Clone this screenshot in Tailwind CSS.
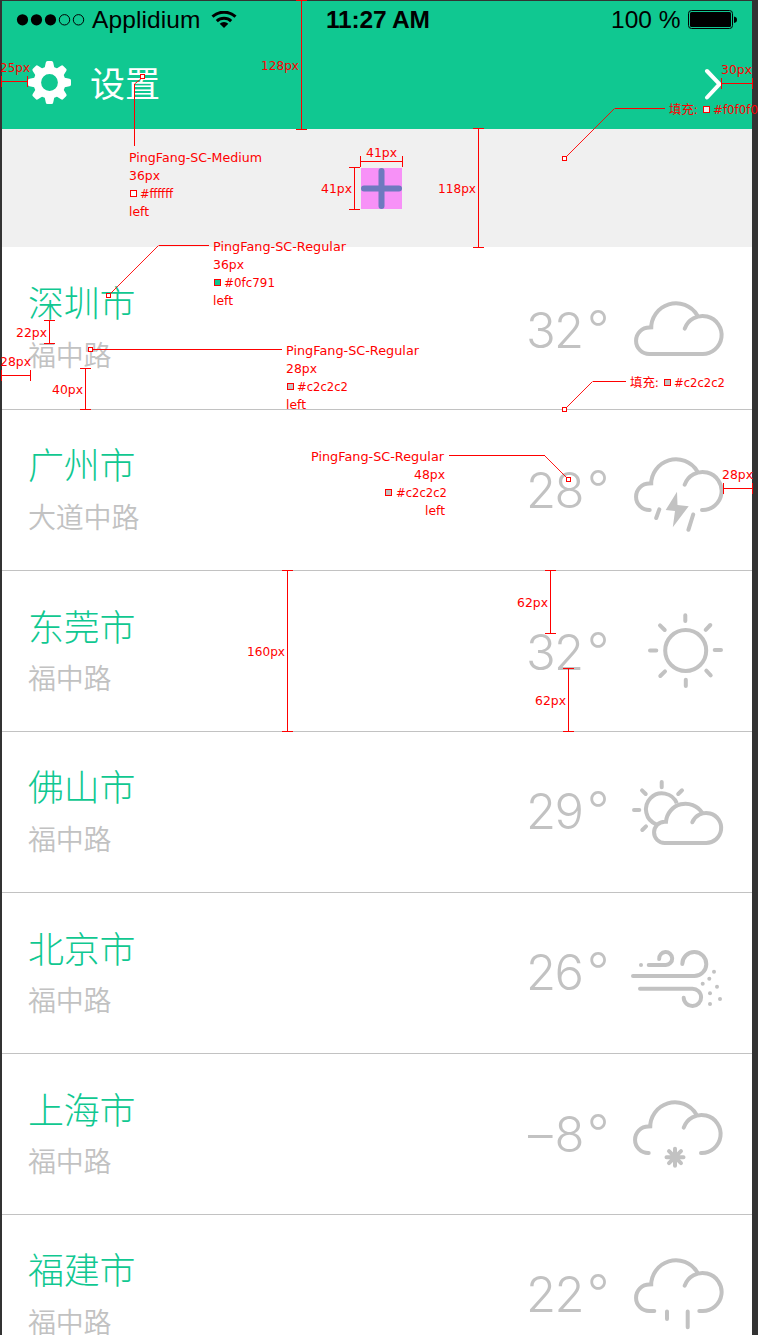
<!DOCTYPE html>
<html lang="zh-CN">
<head>
<meta charset="utf-8">
<title>设置</title>
<script src="https://cdn.jsdelivr.net/npm/@tailwindcss/browser@4"></script>
</head>
<body class="bg-[#333333]">
<div class="relative w-[758px] h-[1335px] overflow-hidden bg-[#333333] pt-px pl-[2px] font-['Noto_Sans_CJK_SC',sans-serif]">
  <main class="w-[750px] h-[1334px] overflow-hidden bg-white">
    <header class="h-[128px] bg-[#10c891]">
      <div class="flex h-[37px] items-center text-black font-['Liberation_Sans',sans-serif]">
        <svg class="ml-[14px] w-[70px] h-[14px]" viewBox="0 0 70 14"><g><circle cx="6.5" cy="6.8" r="5.6"/><circle cx="20.5" cy="6.8" r="5.6"/><circle cx="34.5" cy="6.8" r="5.6"/></g><g fill="none" stroke="#000"><circle cx="48.5" cy="6.8" r="5.2"/><circle cx="62.5" cy="6.8" r="5.2"/></g></svg>
        <span class="ml-[6px] w-[110px] text-[24.5px] leading-[37px] tracking-[0.1px] whitespace-nowrap">Applidium</span>
        <svg class="ml-[9px] w-[26px] h-[18px]" viewBox="0 0 26 18"><g fill="none" stroke="#000" stroke-width="3"><path d="M1.5 5.7a16.8 16.8 0 0 1 23 0"/><path d="M5.8 10.1a10.5 10.5 0 0 1 14.4 0"/></g><path d="M13 17l-4.3-4.2a6.3 6.3 0 0 1 8.6 0z"/></svg>
        <span class="ml-[89px] w-[110px] text-[24.5px] font-bold leading-[37px] tracking-[-0.2px] whitespace-nowrap">11:27 AM</span>
        <span class="ml-[175px] w-[72px] text-[24.5px] leading-[37px] whitespace-nowrap">100 %</span>
        <svg class="ml-[5px] w-[50px] h-[20px]" viewBox="0 0 50 20"><rect x=".5" y=".5" width="44" height="18" rx="3" fill="none" stroke="#000"/><rect x="2" y="2" width="41" height="15" rx="1.5"/><path d="M46 6.5q3 .5 3 3.2t-3 3.2z"/></svg>
      </div>
      <div class="flex h-[91px] items-start">
        <svg class="ml-[26px] mt-[23px] w-[43px] h-[43px]" viewBox="-21.5 -21.5 43 43" fill="#fff"><circle r="12.2" fill="none" stroke="#fff" stroke-width="7.6"/><g id="t"><path d="M-5-14L-3.7-20Q-3.5-21.5-2-21.5H2Q3.5-21.5 3.7-20L5-14z"/><path d="M-5-14L-3.7-20Q-3.5-21.5-2-21.5H2Q3.5-21.5 3.7-20L5-14z" transform="rotate(45)"/><path d="M-5-14L-3.7-20Q-3.5-21.5-2-21.5H2Q3.5-21.5 3.7-20L5-14z" transform="rotate(90)"/><path d="M-5-14L-3.7-20Q-3.5-21.5-2-21.5H2Q3.5-21.5 3.7-20L5-14z" transform="rotate(135)"/></g><use href="#t" transform="rotate(180)"/></svg>
        <h1 class="ml-[19px] mt-[24px] text-[35px] leading-[40px] font-normal text-white">设置</h1>
        <svg class="ml-auto mr-[30px] mt-[30px] w-[18px] h-[33px]" viewBox="0 0 18 33"><path d="M3 3L15.5 16.2L3 29.5" fill="none" stroke="#fff" stroke-width="4" stroke-linecap="round" stroke-linejoin="round"/></svg>
      </div>
    </header>
    <section class="h-[118px] bg-[#f0f0f0] pt-[39px] pl-[359px]">
      <svg class="w-[41px] h-[41px] bg-[#f791f7]" viewBox="0 0 41 41"><path d="M20.5 3V38M3 20.5H38" stroke="#6f79bf" stroke-width="6" stroke-linecap="round"/></svg>
    </section>
    <ul id="list" class="text-[#c2c2c2]"></ul>
  </main>
  <svg id="notes" class="absolute inset-0 w-[758px] h-[1335px] font-['DejaVu_Sans','Noto_Sans_CJK_SC',sans-serif] text-[12.5px]" viewBox="0 0 758 1335"></svg>
</div>
<script>
const cloud = (l, r) => `<path d="M${l} 53H18.3a13.25 13.25 0 0 1 0-26.5H20.2V28.3A24.8 24.8 0 0 1 66.2 14.3M53.7 27.7A19 19 0 1 1 71 53H${r}"/>`;
const icons = {
  cloud: cloud(71, 71),
  storm: cloud(18.7, 71) + '<path d="M28.3 52.3L25.2 61M62.2 57.5L57.4 72.8"/><path d="M46 34.7L34.7 53L44 54L41.8 70.3L57.7 49.2L46.5 48z" fill="#c2c2c2" stroke="none"/>',
  sun: '<circle cx="54.7" cy="37.5" r="20.5"/><path d="M54.3 2.2V8M54.8 66.7V73M19 37.6H25.3M83.7 37H90M29 12.3L33.7 17M79.3 12L74.7 16.8M29.3 63L34 58.3M79.7 62.3L75.3 57.7"/>',
  partly: '<path d="M45.8 23.3A16 16 0 1 0 25.3 44.3" stroke-linecap="butt"/><path d="M30.7 2V7.3M3 30H8.3M11 10.3L14.7 14M51 10.3L47.2 14M11.3 50L15 46.3"/><path d="M75 63H33.7a10.65 10.65 0 0 1 0-21.3H35A19.6 19.6 0 0 1 71 32.7M61.3 42.3A15 15 0 1 1 75 63"/>',
  wind: '<path d="M17.7 17H34.8A6.5 6.5 0 1 0 28.2 11M2 28H63A12 12 0 1 0 51.3 16M9 40.7H61.3A8.7 8.7 0 1 1 52.7 49.7"/><g fill="#c2c2c2" stroke="none"><circle cx="10" cy="17" r="2"/><circle cx="83" cy="23.7" r="2"/><circle cx="78.3" cy="30.7" r="2"/><circle cx="71.7" cy="35.7" r="2"/><circle cx="86" cy="38.7" r="2"/><circle cx="79" cy="45.3" r="2"/><circle cx="89" cy="51" r="2"/><circle cx="79" cy="56" r="2"/></g>',
  snow: '<g transform="translate(-1 0)">' + cloud(18.7, 71) + '</g><path d="M44 48.7V65.7M35.5 57.2H52.5M38 51.2L50 63.2M50 51.2L38 63.2"/>',
  rain: cloud(23.3, 68.3) + '<path d="M36 53.5V61M56.7 53.5V69.3"/>'
};
// city, road, temperature, icon, offsets inside the row: city, road, temperature, icon
const rows = [
  ['深圳市', '福中路', '32', 'cloud', 37, 93, 66, 53.5],
  ['广州市', '大道中路', '28', 'storm', 36, 92, 63, 46.8],
  ['东莞市', '福中路', '32', 'sun', 37, 92, 64, 42.2],
  ['佛山市', '福中路', '29', 'partly', 36, 92, 62, 48.3],
  ['北京市', '福中路', '26', 'wind', 37, 92, 62, 55],
  ['上海市', '福中路', '–8', 'snow', 37, 92, 63, 46],
  ['福建市', '福中路', '22', 'rain', 36, 92, 62, 43]
];
document.getElementById('list').innerHTML = rows.map((r, i) => `
<li class="flex items-start border-b border-[#c2c2c2] ${i ? 'h-[161px]' : 'h-[163px]'}">
  <div class="w-[500px] pl-[26px]">
    <div class="h-[36px] text-[36px] font-light leading-[36px] tracking-[-0.3px] text-[#10c891]" style="margin-top:${r[4] - 1}px">${r[0]}</div>
    <div class="text-[28px] font-[350] leading-[28px] tracking-[-0.2px]" style="margin-top:${r[5] - r[4] - 35}px">${r[1]}</div>
  </div>
  <div class="ml-[24px] flex w-[90px] items-start font-['Inter',sans-serif] font-[260] leading-[36px]" style="margin-top:${r[6]}px">
    <span class="w-[61px] text-[49px] whitespace-nowrap ${r[2] === '–8' ? 'pl-[2px] tracking-[2px]' : 'tracking-[-1.6px]'}">${r[2]}</span><span class="-mt-[2px] text-[49px]">°</span>
  </div>
  <svg class="ml-[15px] w-[93px] h-[76px] overflow-visible" style="margin-top:${r[7]}px" viewBox="0 0 93 76" fill="none" stroke="#c2c2c2" stroke-width="4" stroke-linecap="round">${icons[r[3]]}</svg>
</li>`).join('');

const R = '#ff0000';
let out = '';
const line = d => out += `<path d="${d}" fill="none" stroke="${R}" shape-rendering="crispEdges"/>`;
const diag = d => out += `<path d="${d}" fill="none" stroke="${R}" stroke-width=".9"/>`;
const box = (x, y, s, f) => out += `<rect x="${x + .5}" y="${y + .5}" width="${s}" height="${s}" fill="${f}" stroke="${R}"/>`;
const text = (x, y, w, t) => out += `<text x="${x}" y="${y}" textLength="${w}" lengthAdjust="spacingAndGlyphs" fill="${R}">${t}</text>`;
const vdim = (x, a, b) => line(`M${x + .5} ${a}V${b + 1}M${x - 5} ${a + .5}h11M${x - 5} ${b + .5}h11`);
const hdim = (y, a, b) => line(`M${a} ${y + .5}H${b + 1}M${a + .5} ${y - 5}v11M${b + .5} ${y - 5}v11`);
vdim(301, 0, 129); vdim(478, 128, 247); vdim(354, 167, 209); vdim(49, 320, 343); vdim(85, 368, 409);
vdim(287, 570, 731); vdim(550, 570, 633); vdim(568, 668, 731);
hdim(81, 1, 27); hdim(161, 360, 402); hdim(83, 721, 752); hdim(375, 1, 30); hdim(488, 723, 752);
diag('M142 78L134.5 84'); line('M134.5 84V146');
line('M209 245.5H158.5'); diag('M158.5 245.5L110 294');
line('M92 349.5H282');
line('M665 108.5H614.5'); diag('M614.5 108.5L566 157');
line('M626 381.5H592.5'); diag('M592.5 381.5L566 408');
line('M449 455.5H544.5'); diag('M544.5 455.5L567 478');
box(140, 74, 4, '#fff'); box(106, 293, 4, '#fff'); box(88, 347, 4, '#fff'); box(562, 156, 4, '#fff'); box(562, 407, 4, '#fff'); box(566, 477, 4, '#fff');
text(0, 72, 30, '25px'); text(261, 70, 38, '128px'); text(721, 74, 31, '30px');
text(366, 157, 31, '41px'); text(321, 193, 31, '41px'); text(438, 193, 38, '118px');
text(129, 162, 133, 'PingFang-SC-Medium'); text(129, 180, 31, '36px'); box(130, 190, 6, '#fff'); text(140, 198, 33, '#ffffff'); text(129, 216, 20, 'left');
text(213, 251, 133, 'PingFang-SC-Regular'); text(213, 269, 31, '36px'); box(214, 279, 6, '#0fc791'); text(224, 287, 51, '#0fc791'); text(213, 305, 20, 'left');
text(286, 355, 133, 'PingFang-SC-Regular'); text(286, 373, 31, '28px'); box(287, 383, 6, '#c2c2c2'); text(297, 391, 51, '#c2c2c2'); text(286, 409, 20, 'left');
text(311, 461, 133, 'PingFang-SC-Regular'); text(414, 479, 31, '48px'); box(385, 489, 6, '#c2c2c2'); text(396, 497, 51, '#c2c2c2'); text(425, 515, 20, 'left');
text(669, 114, 29, '填充:'); box(703, 106, 6, '#f0f0f0'); text(713, 114, 45, '#f0f0f0');
text(630, 387, 29, '填充:'); box(664, 379, 6, '#c2c2c2'); text(674, 387, 51, '#c2c2c2');
text(16, 337, 31, '22px'); text(0, 366, 31, '28px'); text(52, 394, 31, '40px');
text(247, 656, 38, '160px'); text(517, 607, 31, '62px'); text(535, 705, 31, '62px'); text(722, 479, 31, '28px');
document.getElementById('notes').innerHTML = out;
</script>
</body>
</html>
